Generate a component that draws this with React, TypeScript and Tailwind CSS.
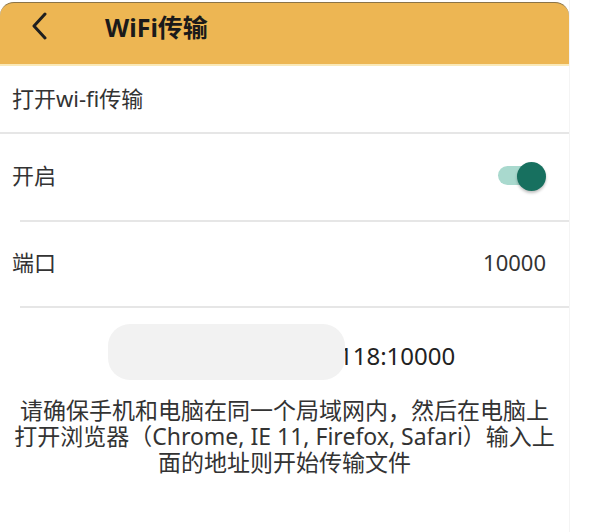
import React from "react";

export default function App() {
  const font = { fontFamily: '"Noto Sans", "Noto Sans CJK SC", sans-serif' };
  return (
    <div className="w-[592px] h-[532px] bg-white overflow-hidden" style={font}>
      <div className="w-[570px] h-full border-r border-[#f4f4f4] flex flex-col">
        <div className="mt-[2px] h-[62px] bg-[#EDB653] rounded-t-[14px] border-t border-[#8a7448] flex items-start">
          <div className="flex items-center h-[48px] pl-[30px]">
            <svg width="20" height="28" viewBox="0 0 20 28" className="mt-[-2px]">
              <path d="M15 2 L4 14 L15 26" fill="none" stroke="#1f1f1f" strokeWidth="3" strokeLinecap="round" strokeLinejoin="round" />
            </svg>
            <span className="ml-[55px] text-[25px] font-bold text-[#1a1a1a] leading-none">WiFi传输</span>
          </div>
        </div>
        <div className="h-[2px] bg-[#FAE9B8]" />
        <div className="h-[68px] flex items-center pl-[12px] pb-[2px] border-b-2 border-[#e6e6e6]">
          <span className="text-[22px] text-[#333]">打开wi-fi传输</span>
        </div>
        <div className="h-[86px] flex items-center pl-[12px] pr-[23px] pb-[3px] relative">
          <span className="text-[22px] text-[#333]">开启</span>
          <div className="ml-auto relative w-[48px] h-[30px] flex items-center">
            <div className="w-[40px] h-[19px] rounded-full bg-[#A9D9CE]" />
            <div className="absolute right-0 top-[1px] w-[29px] h-[29px] rounded-full bg-[#17705F] shadow-[0_2px_3px_rgba(0,0,0,0.25)]" />
          </div>
        </div>
        <div className="ml-[20px] h-[2px] bg-[#e6e6e6]" />
        <div className="h-[84px] flex items-center pl-[12px] pr-[23px] pb-[3px]">
          <span className="text-[22px] text-[#333]">端口</span>
          <span className="ml-auto text-[22px] text-[#333]">10000</span>
        </div>
        <div className="ml-[20px] h-[2px] bg-[#e6e6e6]" />
        <div className="flex items-center mt-[16px] pl-[108px]">
          <div className="relative z-10 w-[237px] h-[56px] rounded-[22px] bg-[#f2f2f2]" />
          <span className="ml-[-6px] text-[24px] text-[#222] mt-[8px]">118:10000</span>
        </div>
        <p className="mt-[17px] text-center text-[23px] leading-[26px] text-[#333] whitespace-nowrap">
          请确保手机和电脑在同一个局域网内，然后在电脑上
          <br />
          打开浏览器（Chrome, IE 11, Firefox, Safari）输入上
          <br />
          面的地址则开始传输文件
        </p>
      </div>
    </div>
  );
}
